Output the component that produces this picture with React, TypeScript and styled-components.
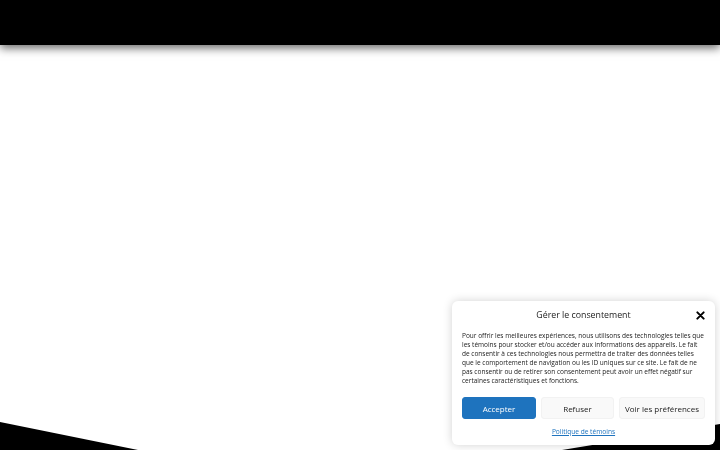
import React from 'react';
import styled, { createGlobalStyle } from 'styled-components';

const GlobalStyle = createGlobalStyle`
  html, body {
    margin: 0;
    padding: 0;
    height: 100%;
    background: #ffffff;
    font-family: 'Open Sans', 'Liberation Sans', sans-serif;
    overflow: hidden;
  }
  #root {
    height: 100%;
  }
`;

const Page = styled.div`
  height: 100vh;
  display: flex;
  flex-direction: column;
`;

const Header = styled.header`
  height: 45px;
  flex-shrink: 0;
  background: #000;
  box-shadow: 0 3px 9px rgba(0, 0, 0, 0.6);
  position: relative;
  z-index: 2;
`;

const Main = styled.main`
  flex: 1;
`;

const Divider = styled.div`
  height: 28px;
  flex-shrink: 0;
  background: #000;
  svg {
    display: block;
    width: 100%;
    height: 100%;
  }
`;

const Banner = styled.div`
  position: fixed;
  right: 5px;
  bottom: 5px;
  width: 263px;
  box-sizing: border-box;
  padding: 7px 10px 8px;
  background: #fff;
  border-radius: 6px;
  box-shadow: 0 0 10px rgba(0, 0, 0, 0.18);
  z-index: 10;
  display: flex;
  flex-direction: column;
`;

const TitleRow = styled.div`
  position: relative;
  height: 14px;
  display: flex;
  align-items: center;
  justify-content: center;
`;

const Title = styled.div`
  font-size: 8.8px;
  color: #222;
`;

const Close = styled.button`
  position: absolute;
  right: -1px;
  top: 1px;
  border: 0;
  background: none;
  padding: 0;
  width: 12px;
  height: 12px;
  display: flex;
  align-items: center;
  justify-content: center;
  cursor: pointer;
`;

const Message = styled.div`
  margin-top: 9px;
  font-size: 6.5px;
  line-height: 9px;
  color: #222;
  white-space: nowrap;
`;

const Buttons = styled.div`
  margin-top: 12px;
  display: grid;
  grid-template-columns: 74px 73px 1fr;
  gap: 5px;
`;

const Btn = styled.button<{ $primary?: boolean }>`
  height: 22px;
  border-radius: 3px;
  font-family: inherit;
  font-size: 8px;
  padding: 0;
  cursor: pointer;
  background: ${p => (p.$primary ? '#1e73be' : '#f9f9f9')};
  color: ${p => (p.$primary ? '#fff' : '#222')};
  border: 1px solid ${p => (p.$primary ? '#1e73be' : '#f2f2f2')};
`;

const Links = styled.div`
  margin-top: 8px;
  display: flex;
  justify-content: center;
`;

const Link = styled.a`
  font-size: 6.6px;
  color: #1e73be;
  text-decoration: underline;
  line-height: 10px;
`;

const lines = [
  'Pour offrir les meilleures expériences, nous utilisons des technologies telles que',
  'les témoins pour stocker et/ou accéder aux informations des appareils. Le fait',
  'de consentir à ces technologies nous permettra de traiter des données telles',
  'que le comportement de navigation ou les ID uniques sur ce site. Le fait de ne',
  'pas consentir ou de retirer son consentement peut avoir un effet négatif sur',
  'certaines caractéristiques et fonctions.',
];

export default function App() {
  return (
    <>
      <GlobalStyle />
      <Page>
        <Header />
        <Main />
        <Divider>
          <svg viewBox="0 0 720 28" preserveAspectRatio="none">
            <polygon points="0,0 138,28 562,28 720,2 720,0" fill="#fff" />
          </svg>
        </Divider>
      </Page>
      <Banner>
        <TitleRow>
          <Title>Gérer le consentement</Title>
          <Close aria-label="Fermer">
            <svg width="9" height="9" viewBox="0 0 10 10">
              <path d="M1.5 1.5 L8.5 8.5 M8.5 1.5 L1.5 8.5" stroke="#000" strokeWidth="2.2" strokeLinecap="round" />
            </svg>
          </Close>
        </TitleRow>
        <Message>
          {lines.map((l, i) => (
            <div key={i}>{l}</div>
          ))}
        </Message>
        <Buttons>
          <Btn $primary>Accepter</Btn>
          <Btn>Refuser</Btn>
          <Btn>Voir les préférences</Btn>
        </Buttons>
        <Links>
          <Link href="#">Politique de témoins</Link>
        </Links>
      </Banner>
    </>
  );
}
